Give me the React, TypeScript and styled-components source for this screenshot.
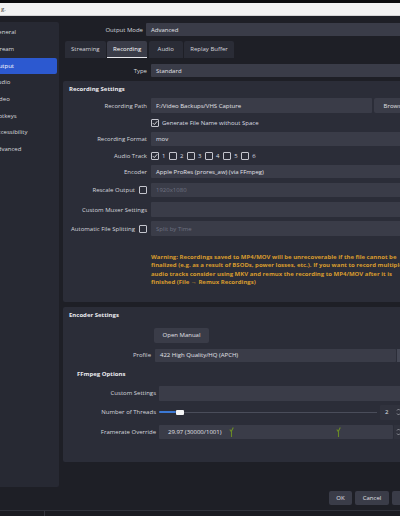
import React from 'react';
import styled, { createGlobalStyle } from 'styled-components';

const Global = createGlobalStyle`
  html, body { margin: 0; padding: 0; background: #1e1f26; }
  body {
    font-family: "Open Sans", "Noto Sans", sans-serif;
    font-size: 6px;
    color: #dcdde3;
    overflow: hidden;
  }
  #root { width: 400px; height: 516px; overflow: hidden; }
  * { box-sizing: border-box; }
`;

const Frame = styled.div`
  width: 430px;
  height: 516px;
  display: flex;
  flex-direction: column;
  background: #1e1f26;
`;

const TopEdge = styled.div`
  flex: none;
  height: 3px;
  background: #0c0c0e;
`;

const TitleBar = styled.div`
  flex: none;
  height: 13px;
  background: #f2f2f2;
  border-bottom: 1px solid #d4d4d6;
  color: #4a4a4a;
  line-height: 13px;
  padding-left: 1px;
`;

const Body = styled.div`
  flex: none;
  height: 471px;
  display: flex;
`;

const Sidebar = styled.nav`
  flex: none;
  width: 59px;
  margin-top: 6px;
  background: #272933;
  padding: 2.25px 2px 0 0;
  display: flex;
  flex-direction: column;
  border-radius: 0 2px 2px 0;
`;

const NavItem = styled.div<{ $active?: boolean }>`
  height: 16.7px;
  line-height: 16.7px;
  white-space: nowrap;
  overflow: hidden;
  background: ${(p) => (p.$active ? '#2c59d0' : 'transparent')};
  color: ${(p) => (p.$active ? '#ffffff' : '#d8d9df')};
  border-radius: 0 2px 2px 0;
`;

const NavLabel = styled.span`
  display: inline-block;
  margin-left: -6px;
`;

const Main = styled.div`
  flex: none;
  width: 367px;
  margin-left: 4px;
  display: flex;
  flex-direction: column;
  padding-top: 7px;
`;

const FormRow = styled.div<{ $label: number; $gap?: number; $h: number; $mt?: number }>`
  display: grid;
  grid-template-columns: ${(p) => p.$label}px 1fr;
  column-gap: ${(p) => p.$gap ?? 4}px;
  height: ${(p) => p.$h}px;
  margin-top: ${(p) => p.$mt ?? 0}px;
`;

const Label = styled.div`
  display: flex;
  align-items: center;
  justify-content: flex-end;
  gap: 4px;
  white-space: nowrap;
  color: #d6d7de;
`;

const Cell = styled.div<{ $gap?: number }>`
  display: flex;
  align-items: center;
  gap: ${(p) => p.$gap ?? 0}px;
  min-width: 0;
`;

const Field = styled.div<{ $dim?: boolean; $pad?: number }>`
  position: relative;
  flex: 1;
  align-self: stretch;
  display: flex;
  align-items: center;
  background: #3a3c48;
  border-radius: 1px;
  padding-left: ${(p) => p.$pad ?? 5}px;
  white-space: nowrap;
  overflow: hidden;
  color: ${(p) => (p.$dim ? '#6f7282' : '#e2e3e8')};
`;

const ComboArrow = styled.div`
  align-self: stretch;
  width: 5px;
  margin-left: 1px;
  background: #454855;
  border-radius: 0 1px 1px 0;
`;

const Tabs = styled.div`
  display: flex;
  gap: 1.5px;
  margin-top: 5px;
  padding-left: 2px;
  height: 17px;
`;

const Tab = styled.div<{ $active?: boolean }>`
  min-width: 34px;
  padding: 0 6px;
  display: flex;
  align-items: center;
  justify-content: center;
  background: ${(p) => (p.$active ? '#3a3c48' : '#2a2c36')};
  color: ${(p) => (p.$active ? '#ffffff' : '#d4d5dc')};
  border-bottom: 1px solid ${(p) => (p.$active ? '#e6e6ea' : 'transparent')};
  border-radius: 2px 2px 0 0;
  white-space: nowrap;
`;

const TabPage = styled.div`
  margin-top: 1px;
  display: flex;
  flex-direction: column;
  padding-top: 5px;
`;

const Group = styled.section<{ $pr: number; $pb: number; $mt: number }>`
  margin-top: ${(p) => p.$mt}px;
  background: #2b2d38;
  border-radius: 2px;
  padding: 0 ${(p) => p.$pr}px ${(p) => p.$pb}px 0;
  display: flex;
  flex-direction: column;
`;

const GroupTitle = styled.div<{ $h: number; $mt?: number; $pl: number }>`
  height: ${(p) => p.$h}px;
  line-height: ${(p) => p.$h}px;
  margin-top: ${(p) => p.$mt ?? 0}px;
  padding-left: ${(p) => p.$pl}px;
  font-weight: 700;
  color: #e9e9ee;
  white-space: nowrap;
`;

const Box = styled.span`
  flex: none;
  width: 8px;
  height: 8px;
  border: 1px solid #c4c5cd;
  border-radius: 1px;
  display: inline-flex;
  align-items: center;
  justify-content: center;
`;

const CheckText = styled.span`
  margin-left: 3px;
  white-space: nowrap;
  color: #dcdde3;
`;

const TrackItem = styled.span`
  display: inline-flex;
  align-items: center;
`;

const Button = styled.div<{ $w: number }>`
  flex: none;
  width: ${(p) => p.$w}px;
  align-self: stretch;
  display: flex;
  align-items: center;
  justify-content: center;
  background: #3a3c48;
  border-radius: 2px;
  color: #e0e1e6;
  white-space: nowrap;
`;

const Warning = styled.div`
  color: #d79b2e;
  font-weight: 700;
  line-height: 8.4px;
  white-space: nowrap;
`;

const SliderTrack = styled.div`
  position: relative;
  flex: 1;
  height: 6px;
  display: flex;
  align-items: center;
`;

const TrackFill = styled.div`
  height: 2px;
  background: #3b78d4;
  border-radius: 1px;
`;

const TrackRest = styled.div`
  flex: 1;
  height: 1px;
  background: #4a4d5a;
`;

const Handle = styled.div`
  width: 8px;
  height: 5px;
  background: #f4f4f6;
  border-radius: 1px;
`;

const SpinBox = styled.div`
  flex: none;
  width: 22px;
  align-self: stretch;
  display: flex;
  align-items: center;
  justify-content: space-between;
  padding: 0 1px 0 5px;
  background: #30323d;
  border-radius: 1px;
  color: #e2e3e8;
`;

const SpinArrowsBox = styled.div`
  flex: none;
  width: 8px;
  align-self: stretch;
  margin-left: 1px;
  display: flex;
  align-items: center;
  justify-content: center;
  background: #30323d;
`;

const Sprout = styled.svg<{ $left: number }>`
  position: absolute;
  top: 1px;
  left: ${(p) => p.$left}px;
`;

const Footer = styled.div`
  flex: none;
  height: 23px;
  display: flex;
  justify-content: flex-end;
  gap: 3px;
  padding: 4px 4px 5px 0;
`;

const BottomStrip = styled.div`
  flex: none;
  height: 6px;
  display: flex;
  border-top: 1px solid #30323b;
  background: #1b1c22;
`;

const StripCell = styled.div`
  width: 45px;
  border-right: 1px solid #34363f;
`;

const Check = ({ on }: { on?: boolean }) => (
  <Box>
    {on && (
      <svg width="6" height="6" viewBox="0 0 6 6">
        <path d="M0.8 3.1 L2.3 4.6 L5.3 1.2" fill="none" stroke="#e4e5ea" strokeWidth="0.9" />
      </svg>
    )}
  </Box>
);

const Arrows = () => (
  <svg width="5" height="10" viewBox="0 0 5 10">
    <path d="M1 3.5 L2.5 2 L4 3.5" fill="none" stroke="#b8b9c2" strokeWidth="0.7" />
    <path d="M1 6.5 L2.5 8 L4 6.5" fill="none" stroke="#b8b9c2" strokeWidth="0.7" />
  </svg>
);

const SproutIcon = ({ left }: { left: number }) => (
  <Sprout $left={left} width="5" height="11" viewBox="0 0 5 11">
    <path d="M2.5 11 L2.5 4 M2.5 6 L0.8 3.5 M2.5 5 L4.3 1.5" fill="none" stroke="#6a8a26" strokeWidth="1.1" />
  </Sprout>
);

const navItems = ['General', 'Stream', 'Output', 'Audio', 'Video', 'Hotkeys', 'Accessibility', 'Advanced'];
const tabs = ['Streaming', 'Recording', 'Audio', 'Replay Buffer'];

export default function App() {
  return (
    <>
      <Global />
      <Frame>
        <TopEdge />
        <TitleBar>g.</TitleBar>
        <Body>
          <Sidebar>
            {navItems.map((n) => (
              <NavItem key={n} $active={n === 'Output'}>
                <NavLabel>{n}</NavLabel>
              </NavItem>
            ))}
          </Sidebar>
          <Main>
            <FormRow $label={80} $gap={3} $h={13}>
              <Label>Output Mode</Label>
              <Cell>
                <Field>Advanced</Field>
              </Cell>
            </FormRow>
            <Tabs>
              {tabs.map((t) => (
                <Tab key={t} $active={t === 'Recording'}>
                  {t}
                </Tab>
              ))}
            </Tabs>
            <TabPage>
              <FormRow $label={84} $h={13}>
                <Label>Type</Label>
                <Cell>
                  <Field>Standard</Field>
                </Cell>
              </FormRow>

              <Group $mt={4} $pr={16} $pb={15.4}>
                <GroupTitle $h={17} $pl={6}>Recording Settings</GroupTitle>
                <FormRow $label={84} $h={15}>
                  <Label>Recording Path</Label>
                  <Cell $gap={2}>
                    <Field>F:/Video Backups/VHS Capture</Field>
                    <Button $w={40}>Browse</Button>
                  </Cell>
                </FormRow>
                <FormRow $label={84} $h={13} $mt={3}>
                  <Label />
                  <Cell>
                    <Check on />
                    <CheckText>Generate File Name without Space</CheckText>
                  </Cell>
                </FormRow>
                <FormRow $label={84} $h={14} $mt={3}>
                  <Label>Recording Format</Label>
                  <Cell>
                    <Field>mov</Field>
                  </Cell>
                </FormRow>
                <FormRow $label={84} $h={13} $mt={3}>
                  <Label>Audio Track</Label>
                  <Cell $gap={3.6}>
                    {[1, 2, 3, 4, 5, 6].map((n) => (
                      <TrackItem key={n}>
                        <Check on={n === 1} />
                        <CheckText>{n}</CheckText>
                      </TrackItem>
                    ))}
                  </Cell>
                </FormRow>
                <FormRow $label={84} $h={13} $mt={3}>
                  <Label>Encoder</Label>
                  <Cell>
                    <Field>Apple ProRes (prores_aw) (via FFmpeg)</Field>
                  </Cell>
                </FormRow>
                <FormRow $label={84} $h={14} $mt={5}>
                  <Label>
                    Rescale Output
                    <Check />
                  </Label>
                  <Cell>
                    <Field $dim>1920x1080</Field>
                  </Cell>
                </FormRow>
                <FormRow $label={84} $h={15} $mt={5}>
                  <Label>Custom Muxer Settings</Label>
                  <Cell>
                    <Field />
                  </Cell>
                </FormRow>
                <FormRow $label={84} $h={15} $mt={4}>
                  <Label>
                    Automatic File Splitting
                    <Check />
                  </Label>
                  <Cell>
                    <Field $dim>Split by Time</Field>
                  </Cell>
                </FormRow>
                <FormRow $label={84} $h={33.6} $mt={17}>
                  <Label />
                  <Warning>
                    Warning: Recordings saved to MP4/MOV will be unrecoverable if the file cannot be
                    <br />
                    finalized (e.g. as a result of BSODs, power losses, etc.). If you want to record multiple
                    <br />
                    audio tracks consider using MKV and remux the recording to MP4/MOV after it is
                    <br />
                    finished (File → Remux Recordings)
                  </Warning>
                </FormRow>
              </Group>

              <Group $mt={5} $pr={28} $pb={23}>
                <GroupTitle $h={17} $pl={6}>Encoder Settings</GroupTitle>
                <FormRow $label={87} $h={15} $mt={4}>
                  <Label />
                  <Cell>
                    <Button $w={55}>Open Manual</Button>
                  </Cell>
                </FormRow>
                <FormRow $label={88} $h={13} $mt={6}>
                  <Label>Profile</Label>
                  <Cell>
                    <Field>422 High Quality/HQ (APCH)</Field>
                    <ComboArrow />
                  </Cell>
                </FormRow>
                <GroupTitle $h={18} $mt={3} $pl={14}>FFmpeg Options</GroupTitle>
                <FormRow $label={93} $gap={3} $h={15} $mt={3}>
                  <Label>Custom Settings</Label>
                  <Cell>
                    <Field />
                  </Cell>
                </FormRow>
                <FormRow $label={93} $gap={3} $h={15} $mt={4}>
                  <Label>Number of Threads</Label>
                  <Cell $gap={3}>
                    <SliderTrack>
                      <TrackFill style={{ width: '17px' }} />
                      <Handle />
                      <TrackRest />
                    </SliderTrack>
                    <SpinBox>
                      2
                      <Arrows />
                    </SpinBox>
                  </Cell>
                </FormRow>
                <FormRow $label={93} $gap={3} $h={14} $mt={5}>
                  <Label>Framerate Override</Label>
                  <Cell>
                    <Field $pad={9}>
                      29.97 (30000/1001)
                      <SproutIcon left={70} />
                      <SproutIcon left={177} />
                    </Field>
                    <SpinArrowsBox>
                      <Arrows />
                    </SpinArrowsBox>
                  </Cell>
                </FormRow>
              </Group>
            </TabPage>
          </Main>
        </Body>
        <Footer>
          <Button $w={23}>OK</Button>
          <Button $w={34}>Cancel</Button>
          <Button $w={34}>Apply</Button>
        </Footer>
        <BottomStrip>
          <StripCell />
        </BottomStrip>
      </Frame>
    </>
  );
}
